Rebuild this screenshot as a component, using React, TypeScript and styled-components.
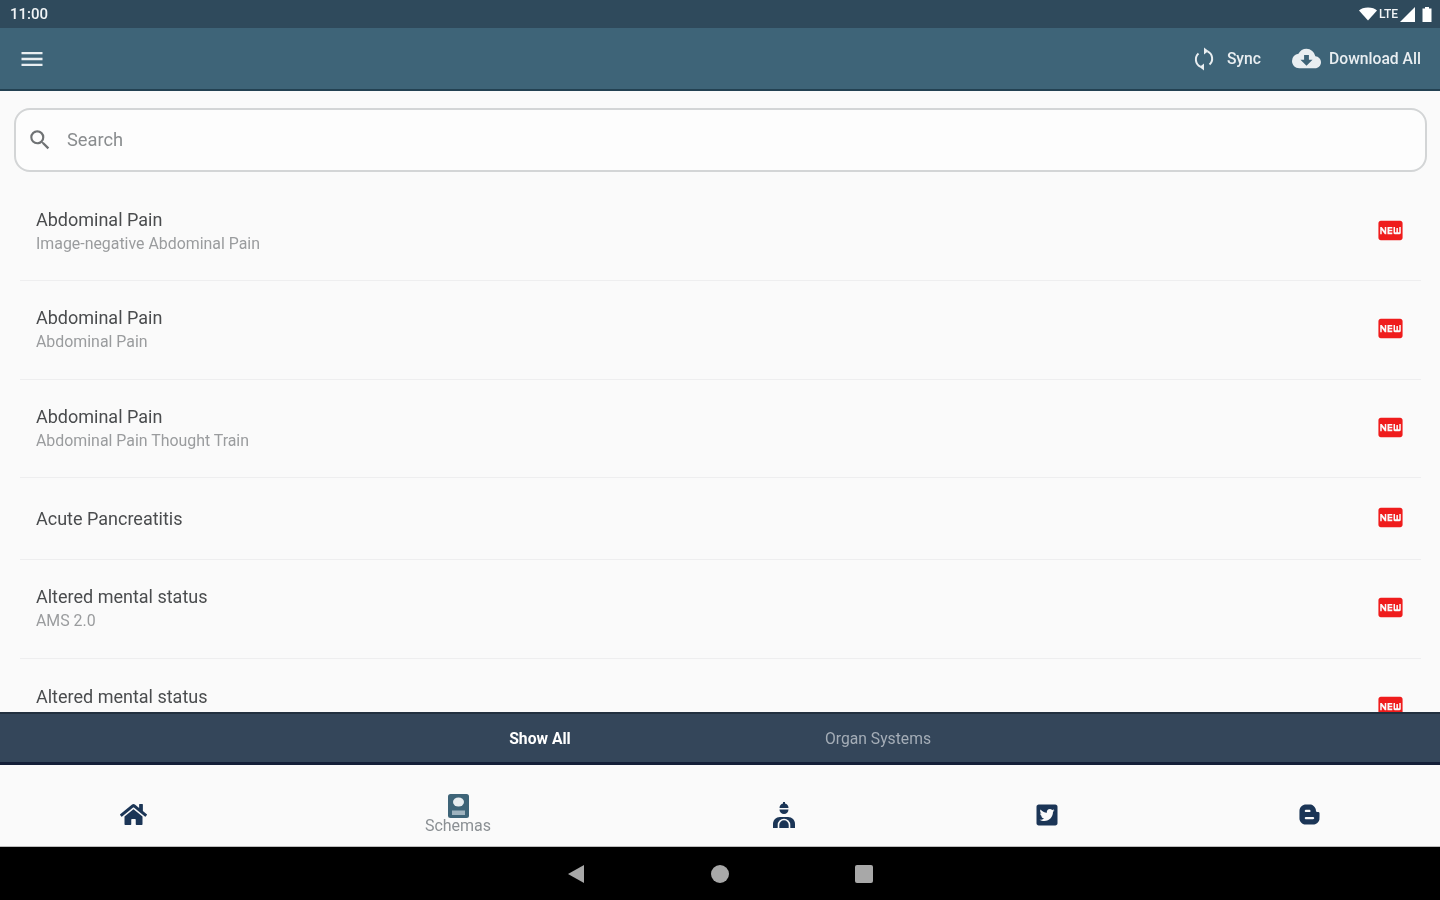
import styled, { createGlobalStyle } from 'styled-components';
import { FaBloggerB, FaHome, FaTwitterSquare } from 'react-icons/fa';
import { MdCloudDownload, MdFiberNew, MdMenu, MdSearch } from 'react-icons/md';

const GlobalStyle = createGlobalStyle`
  html, body {
    margin: 0;
    padding: 0;
    height: 100%;
    overflow: hidden;
    background: #fafafa;
  }
  * {
    box-sizing: border-box;
  }
`;

const Screen = styled.div`
  width: 1440px;
  height: 900px;
  display: flex;
  flex-direction: column;
  overflow: hidden;
  background: #fafafa;
  font-family: Roboto, 'Liberation Sans', sans-serif;
  filter: blur(0.7px);
`;

const StatusBar = styled.div`
  height: 28px;
  flex: none;
  display: flex;
  align-items: center;
  justify-content: space-between;
  padding: 0 8px 0 10px;
  background: #2f4a5c;
  color: #f1f4f6;
  font-size: 15px;
  font-weight: 500;
`;

const StatusIcons = styled.div`
  display: flex;
  align-items: center;
  gap: 2px;
  font-size: 12px;
`;

const AppBar = styled.header`
  height: 63px;
  flex: none;
  display: flex;
  align-items: center;
  justify-content: space-between;
  padding: 0 19px 0 20px;
  background: #3e6478;
  border-bottom: 2px solid #234152;
  color: #e9eef1;
`;

const MenuButton = styled.div`
  display: flex;
  margin-left: -2px;
  font-size: 28px;
`;

const Actions = styled.div`
  display: flex;
  align-items: center;
  gap: 31px;
`;

const Action = styled.div<{ $gap: number }>`
  display: flex;
  align-items: center;
  gap: ${(p) => p.$gap}px;
  font-size: 15.7px;
  font-weight: 500;
`;

const Content = styled.main`
  flex: 1;
  min-height: 0;
  overflow: hidden;
  padding: 17px 13px 0 14px;
`;

const SearchBox = styled.div`
  height: 64px;
  display: flex;
  align-items: center;
  gap: 14px;
  padding: 0 11px 1px;
  background: #fdfdfd;
  border: 2px solid #d3d5d6;
  border-radius: 16px;
  color: #8a8d8f;
  font-size: 18.3px;
  margin-bottom: 10.5px;
`;

const List = styled.div`
  padding: 0 6px;
`;

const Row = styled.div<{ $single?: boolean }>`
  height: ${(p) => (p.$single ? '82px' : '98.5px')};
  display: flex;
  align-items: center;
  justify-content: space-between;
  padding: 0 16px;
  border-bottom: 1px solid #eeeeef;
  &:last-child {
    border-bottom: none;
  }
`;

const RowText = styled.div<{ $top?: boolean }>`
  display: flex;
  flex-direction: column;
  gap: 5px;
  ${(p) => p.$top && 'align-self: flex-start; padding-top: 28.5px;'}
`;

const RowTitle = styled.div`
  color: #4a4c4e;
  font-size: 18px;
  line-height: 20px;
`;

const RowSubtitle = styled.div`
  color: #9a9c9e;
  font-size: 15.9px;
  line-height: 18px;
`;

const NewBadge = styled(MdFiberNew)`
  flex: none;
  color: #ef1c1c;
  font-size: 29px;
  margin-bottom: 2px;
`;

const TabBar = styled.div`
  height: 53px;
  flex: none;
  display: grid;
  grid-template-columns: 338px 338px;
  justify-content: center;
  align-items: center;
  padding-right: 22px;
  background: #34465a;
  border-top: 2px solid #22303f;
  border-bottom: 3px solid #141f38;
`;

const Tab = styled.div<{ $active?: boolean }>`
  text-align: center;
  color: ${(p) => (p.$active ? '#ffffff' : '#a4adb7')};
  font-size: 15.7px;
  font-weight: ${(p) => (p.$active ? 700 : 400)};
`;

const BottomNav = styled.nav`
  height: 82px;
  flex: none;
  display: grid;
  grid-template-columns: 262px 388px 264px 262px 262px;
  padding-left: 2px;
  background: #fafafa;
  border-bottom: 1px solid #bdbdbd;
`;

const NavItem = styled.div<{ $size: number }>`
  display: flex;
  flex-direction: column;
  align-items: center;
  justify-content: center;
  padding-top: 18px;
  color: #1b3556;
  font-size: ${(p) => p.$size}px;
`;

const SchemaIcon = styled.svg`
  width: 21px;
  height: 24px;
  margin-top: -2px;
`;

const NavLabel = styled.span`
  color: #8b9094;
  font-size: 16px;
  line-height: 16px;
`;

const SystemNav = styled.div`
  height: 53px;
  flex: none;
  display: flex;
  align-items: center;
  justify-content: center;
  gap: 124px;
  background: #000000;
`;

const rows = [
  { title: 'Abdominal Pain', subtitle: 'Image-negative Abdominal Pain' },
  { title: 'Abdominal Pain', subtitle: 'Abdominal Pain' },
  { title: 'Abdominal Pain', subtitle: 'Abdominal Pain Thought Train' },
  { title: 'Acute Pancreatitis', single: true },
  { title: 'Altered mental status', subtitle: 'AMS 2.0' },
  { title: 'Altered mental status', top: true },
];

export default function App() {
  return (
    <Screen>
      <GlobalStyle />
      <StatusBar>
        <span>11:00</span>
        <StatusIcons>
          <svg width="18" height="14" viewBox="0 0 18 14">
            <path d="M0 3.500C2 1.500 5 .5 9 .5s7 1 9 3l-9 10z" fill="#fff" />
          </svg>
          <span>LTE</span>
          <svg width="15" height="15" viewBox="0 0 15 15">
            <path d="M15 0v15H0z" fill="#fff" />
          </svg>
          <svg width="10" height="15" viewBox="0 0 10 15" style={{ marginLeft: 5 }}>
            <path d="M3 0h4v1.500h2.500V15H.5V1.500H3z" fill="#fff" />
          </svg>
        </StatusIcons>
      </StatusBar>
      <AppBar>
        <MenuButton>
          <MdMenu />
        </MenuButton>
        <Actions>
          <Action $gap={13}>
            <svg width="20" height="24" viewBox="0 0 20 24" fill="none">
              <path d="M13.500 4.300A8 8 0 0 1 15.500 17.500M6.500 19.700A8 8 0 0 1 4.500 6.500" stroke="currentColor" strokeWidth="2" />
              <path d="M10 0.500v7l4.500-3.500zM10 23.500v-7l-4.500 3.500z" fill="currentColor" />
            </svg>
            <span>Sync</span>
          </Action>
          <Action $gap={8}>
            <MdCloudDownload size={29} />
            <span>Download All</span>
          </Action>
        </Actions>
      </AppBar>
      <Content>
        <SearchBox>
          <MdSearch size={26} color="#6f7274" />
          <span>Search</span>
        </SearchBox>
        <List>
          {rows.map((row, i) => (
            <Row key={i} $single={row.single}>
              <RowText $top={row.top}>
                <RowTitle>{row.title}</RowTitle>
                {row.subtitle && <RowSubtitle>{row.subtitle}</RowSubtitle>}
              </RowText>
              <NewBadge />
            </Row>
          ))}
        </List>
      </Content>
      <TabBar>
        <Tab $active>Show All</Tab>
        <Tab>Organ Systems</Tab>
      </TabBar>
      <BottomNav>
        <NavItem $size={27}>
          <FaHome />
        </NavItem>
        <NavItem $size={24}>
          <SchemaIcon viewBox="0 0 21 24">
            <rect x="0" y="0" width="21" height="24" rx="2.500" fill="#3e6478" />
            <ellipse cx="10.500" cy="8" rx="5.500" ry="4.500" fill="#e8edf0" />
            <rect x="4" y="16.500" width="13" height="4.500" fill="#9fb3bf" />
          </SchemaIcon>
          <NavLabel>Schemas</NavLabel>
        </NavItem>
        <NavItem $size={25}>
          <svg width="22" height="26" viewBox="0 0 22 26" fill="currentColor">
            <path d="M10 0h2v1.500c2 .5 3.500 2 3.500 4.500h-9c0-2.500 1.500-4 3.500-4.500z" />
            <path d="M6.500 7.500h9a4.500 4.500 0 0 1-9 0z" />
            <path d="M0 26v-4c0-4 3-7 7-7h8c4 0 7 3 7 7v4z" />
            <path d="M5.500 26v-3a5.500 5.500 0 0 1 11 0v3" fill="none" stroke="#fafafa" strokeWidth="1.600" />
            <path d="M11 20.500l2.500 2.500-2.500 3-2.500-3z" />
          </svg>
        </NavItem>
        <NavItem $size={24}>
          <FaTwitterSquare />
        </NavItem>
        <NavItem $size={23}>
          <FaBloggerB />
        </NavItem>
      </BottomNav>
      <SystemNav>
        <svg width="20" height="20" viewBox="0 0 20 20">
          <path d="M18 1v18L2 10z" fill="#a8a8a8" />
        </svg>
        <svg width="20" height="20" viewBox="0 0 20 20">
          <circle cx="10" cy="10" r="9" fill="#a8a8a8" />
        </svg>
        <svg width="20" height="20" viewBox="0 0 20 20">
          <rect x="1" y="1" width="18" height="18" rx="2" fill="#a8a8a8" />
        </svg>
      </SystemNav>
    </Screen>
  );
}
